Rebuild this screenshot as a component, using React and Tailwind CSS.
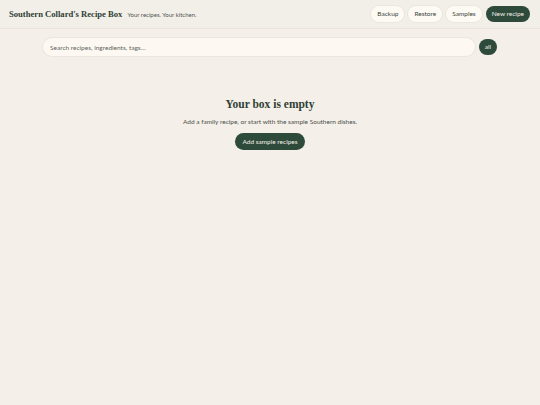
import React, { useState } from "react";

export default function App() {
  const [query, setQuery] = useState("");

  return (
    <div className="min-h-[405px] bg-[#f4efe8] text-[#2b3a31]" style={{ fontFamily: "Lato, 'Open Sans', sans-serif" }}>
      <header className="flex h-[29px] items-center justify-between border-b border-[#ebe5dc] bg-[#f2eee8] pl-[9px] pr-[10px]">
        <div className="flex items-baseline gap-[5px]">
          <h1 className="text-[8.6px] font-bold text-[#2e3f35]" style={{ fontFamily: "'Liberation Serif', serif" }}>
            Southern Collard's Recipe Box
          </h1>
          <span className="text-[6px] text-[#4f5651]">Your recipes. Your kitchen.</span>
        </div>
        <nav className="flex items-center gap-[4px]">
          <button className="h-[16px] rounded-full bg-[#fdfaf4] px-[6px] text-[6.5px] text-[#3c4640] shadow-[0_0_0_1px_#ece6dc]">Backup</button>
          <button className="h-[16px] rounded-full bg-[#fdfaf4] px-[6px] text-[6.5px] text-[#3c4640] shadow-[0_0_0_1px_#ece6dc]">Restore</button>
          <button className="h-[16px] rounded-full bg-[#fdfaf4] px-[6px] text-[6.5px] text-[#3c4640] shadow-[0_0_0_1px_#ece6dc]">Samples</button>
          <button className="h-[16px] rounded-full bg-[#2d4a3b] px-[6px] text-[6.5px] text-[#f4efe8]">New recipe</button>
        </nav>
      </header>

      <main className="mx-auto w-[454px]">
        <div className="mt-[9px] flex items-center gap-[4px]">
          <input
            value={query}
            onChange={(e) => setQuery(e.target.value)}
            placeholder="Search recipes, ingredients, tags…"
            className="h-[18px] flex-1 rounded-full bg-[#fdf9f2] px-[7px] text-[6.5px] text-[#3c4640] outline-none shadow-[0_0_0_1px_#ece6dc] placeholder:text-[#5f655f]"
          />
          <button className="h-[16px] w-[18px] rounded-full bg-[#2d4a3b] text-[6.5px] text-[#f4efe8]">all</button>
        </div>

        <section className="mt-[40px] flex flex-col items-center">
          <h2 className="text-[11.5px] font-bold text-[#2e3f35]" style={{ fontFamily: "'Liberation Serif', serif" }}>
            Your box is empty
          </h2>
          <p className="mt-[4px] text-[6.5px] text-[#4a514c]">
            Add a family recipe, or start with the sample Southern dishes.
          </p>
          <button className="mt-[6px] h-[17px] rounded-full bg-[#2d4a3b] px-[7px] text-[6.5px] text-[#f4efe8]">
            Add sample recipes
          </button>
        </section>
      </main>
    </div>
  );
}
